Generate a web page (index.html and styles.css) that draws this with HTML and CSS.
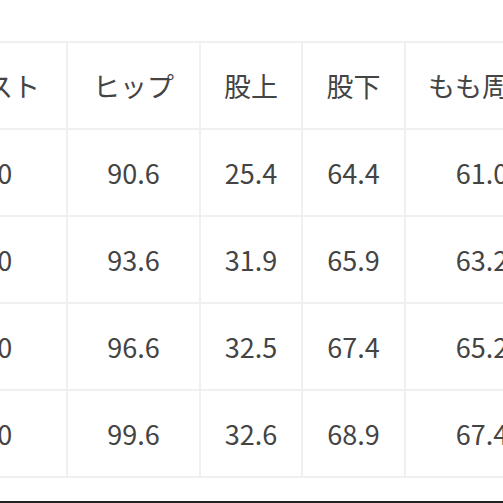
FILE: index.html
```html
<!DOCTYPE html>
<html lang="ja">
<head>
<meta charset="utf-8">
<link rel="stylesheet" href="styles.css">
</head>
<body>
<div class="page">
  <div class="sheet">
    <div class="grid">
      <div class="cell">ウエスト</div>
      <div class="cell">ヒップ</div>
      <div class="cell">股上</div>
      <div class="cell">股下</div>
      <div class="cell">もも周り</div>

      <div class="cell">70.0</div>
      <div class="cell">90.6</div>
      <div class="cell">25.4</div>
      <div class="cell">64.4</div>
      <div class="cell">61.0</div>

      <div class="cell">73.0</div>
      <div class="cell">93.6</div>
      <div class="cell">31.9</div>
      <div class="cell">65.9</div>
      <div class="cell">63.2</div>

      <div class="cell">76.0</div>
      <div class="cell">96.6</div>
      <div class="cell">32.5</div>
      <div class="cell">67.4</div>
      <div class="cell">65.2</div>

      <div class="cell">79.0</div>
      <div class="cell">99.6</div>
      <div class="cell">32.6</div>
      <div class="cell">68.9</div>
      <div class="cell">67.4</div>
    </div>
  </div>
  <div class="bar"></div>
</div>
</body>
</html>
```

FILE: styles.css
```css
html, body {
  margin: 0;
  padding: 0;
  background: #ffffff;
  overflow: hidden;
}
.page {
  height: 503px;
  width: 503px;
  display: flex;
  flex-direction: column;
  overflow: hidden;
}
.sheet {
  padding-top: 41px;
  flex: 1 1 auto;
}
.grid {
  display: grid;
  grid-template-columns: 160px 131px 100px 101px 152px;
  grid-auto-rows: 85px;
  gap: 2px;
  padding: 2px;
  background: #f0f0f0;
  margin-left: -96px;
  width: max-content;
}
.cell {
  background: #ffffff;
  display: flex;
  align-items: center;
  justify-content: center;
  font-family: "Noto Sans CJK JP", "Noto Sans", sans-serif;
  font-size: 27px;
  color: #444444;
  white-space: nowrap;
}
.bar {
  height: 2px;
  background: #222222;
  flex: 0 0 auto;
}
```
